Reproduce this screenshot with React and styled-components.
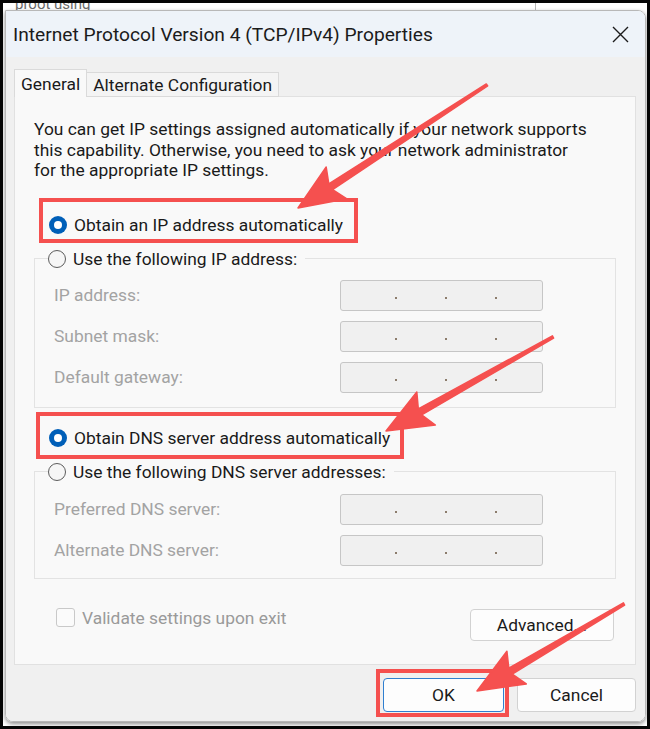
import React from 'react';
import styled, { createGlobalStyle } from 'styled-components';

const GlobalStyle = createGlobalStyle`
  body {
    margin: 0;
    background: #ffffff;
    font-family: Roboto, "Noto Sans", sans-serif;
    color: #1a1a1a;
  }
  * { box-sizing: border-box; }
`;

const RED = '#f5504f';
const TEXT_SIZE = '17.4px';

const Frame = styled.div`
  position: relative;
  width: 650px;
  height: 729px;
  border: 3px solid #050505;
  background: #ffffff;
  padding: 0 1px 0 2px;
  display: flex;
  flex-direction: column;
  overflow: hidden;
`;

const BackStrip = styled.div`
  height: 7px;
  display: flex;
  align-items: flex-end;
  overflow: hidden;
`;

const BackText = styled.span`
  font-size: 15px;
  line-height: 12px;
  height: 12px;
  color: #6a6a6a;
  margin-left: 10px;
  width: 520px;
  flex: none;
`;

const BackLine = styled.span`
  width: 1px;
  height: 7px;
  background: #b5b5b5;
  flex: none;
`;

const Dialog = styled.div`
  height: 712px;
  display: flex;
  flex-direction: column;
  border: 1px solid #b8b8b8;
  border-radius: 0 8px 8px 8px;
  box-shadow: 0 2px 4px rgba(0, 0, 0, 0.45);
  overflow: hidden;
`;

const TitleBar = styled.div`
  height: 46px;
  flex: none;
  background: #eef3f9;
  display: flex;
  align-items: center;
  justify-content: space-between;
  padding: 0 16px 0 7px;
`;

const Title = styled.span`
  font-size: 19.2px;
  color: #1b1b1b;
`;

const Body = styled.div`
  flex: 1;
  background: #f0f0f0;
  padding: 12px 9px 0 8px;
  display: flex;
  flex-direction: column;
`;

const TabRow = styled.div`
  display: flex;
  align-items: flex-end;
  height: 28px;
  margin-bottom: -1px;
`;

const Tab = styled.div`
  position: relative;
  z-index: 1;
  height: ${(p) => (p.$active ? '28px' : '25px')};
  border: 1px solid #dadada;
  border-bottom: ${(p) => (p.$active ? 'none' : '1px solid #dadada')};
  border-left: ${(p) => (p.$active ? '1px solid #dadada' : 'none')};
  background: ${(p) => (p.$active ? '#f9f9f9' : '#f4f4f4')};
  padding: 0 6px;
  display: flex;
  align-items: center;
  font-size: ${TEXT_SIZE};
  color: #1a1a1a;
`;

const Panel = styled.div`
  height: 569px;
  border: 1px solid #e1e1e1;
  background: #f9f9f9;
  padding: 22px 19px 0 19px;
  display: flex;
  flex-direction: column;
  align-items: stretch;
`;

const Intro = styled.p`
  margin: 0;
  font-size: ${TEXT_SIZE};
  line-height: 20.5px;
  color: #1a1a1a;
`;

const RadioRow = styled.div`
  position: relative;
  align-self: flex-start;
  display: flex;
  align-items: center;
  gap: 7px;
  height: 22px;
  margin-left: 15px;
  margin-top: ${(p) => p.$top || 0}px;
  font-size: ${TEXT_SIZE};
  color: #1a1a1a;

  &::after {
    content: '';
    position: absolute;
    inset: ${(p) => p.$box};
    border: 4px solid ${RED};
    pointer-events: none;
  }
`;

const Radio = styled.span`
  width: 18px;
  height: 18px;
  border-radius: 50%;
  flex: none;
  display: flex;
  align-items: center;
  justify-content: center;
  background: ${(p) => (p.$on ? '#005fb8' : '#f6f6f6')};
  border: ${(p) => (p.$on ? 'none' : '1px solid #5c5c5c')};

  &::before {
    content: '';
    display: ${(p) => (p.$on ? 'block' : 'none')};
    width: 8px;
    height: 8px;
    border-radius: 50%;
    background: #ffffff;
  }
`;

const Group = styled.fieldset`
  margin: 12px 0 0;
  padding: ${(p) => p.$pad};
  border: 1px solid #e3e3e3;
  min-width: 0;
`;

const Legend = styled.legend`
  margin-left: 13px;
  padding: 0 8px 0 0;
  display: flex;
  align-items: center;
  gap: 7px;
  height: 22px;
  font-size: ${TEXT_SIZE};
  color: #1a1a1a;
`;

const FieldGrid = styled.div`
  display: grid;
  grid-template-columns: 286px 203px;
  row-gap: 10px;
  align-items: center;
  padding-left: 19px;
`;

const FieldLabel = styled.span`
  font-size: ${TEXT_SIZE};
  color: #a3a3a3;
`;

const AddressBox = styled.div`
  height: 31px;
  border: 1px solid #c6c6c6;
  border-radius: 3px;
  background: #f0f0f0;
  display: flex;
  align-items: center;
  gap: 48px;
  padding: 6px 0 0 54px;
`;

const Dot = styled.span`
  width: 2px;
  height: 2px;
  background: #8c7c6c;
`;

const BottomRow = styled.div`
  margin-top: 30px;
  display: flex;
  justify-content: space-between;
  align-items: flex-start;
  padding-right: 2px;
`;

const CheckLabel = styled.label`
  display: flex;
  align-items: center;
  gap: 7px;
  margin: -1px 0 0 22px;
  font-size: ${TEXT_SIZE};
  color: #9a9a9a;
`;

const CheckBox = styled.span`
  width: 19px;
  height: 19px;
  border: 1px solid #c9c9c9;
  border-radius: 3px;
  background: #fbfbfb;
`;

const Button = styled.button`
  position: relative;
  width: ${(p) => p.$w}px;
  height: ${(p) => p.$h || 34}px;
  border: 1px solid ${(p) => (p.$primary ? '#2f7fd0' : '#d2d2d2')};
  border-radius: 4px;
  background: #fdfdfd;
  font-family: inherit;
  font-size: ${TEXT_SIZE};
  color: #1a1a1a;
  padding: 0;

  &::after {
    content: '';
    display: ${(p) => (p.$box ? 'block' : 'none')};
    position: absolute;
    inset: ${(p) => p.$box};
    border: 4px solid ${RED};
    pointer-events: none;
  }
`;

const Footer = styled.div`
  display: flex;
  justify-content: flex-end;
  gap: 13px;
  padding: 13px 0 0 0;
`;

const Marks = styled.svg`
  position: absolute;
  top: -3px;
  left: -3px;
  pointer-events: none;
`;

const arrow = (x1, y1, x2, y2, head = 46, wing = 19, neck = 7, tail = 2.5, back = 7) => {
  const len = Math.hypot(x2 - x1, y2 - y1);
  const ux = (x2 - x1) / len;
  const uy = (y2 - y1) / len;
  const nx = -uy;
  const ny = ux;
  const bx = x2 - ux * head;
  const by = y2 - uy * head;
  const p = (x, y) => `${x.toFixed(1)},${y.toFixed(1)}`;
  return [
    p(x1 + (nx * tail) / 2, y1 + (ny * tail) / 2),
    p(bx + ux * back + (nx * neck) / 2, by + uy * back + (ny * neck) / 2),
    p(bx + nx * wing, by + ny * wing),
    p(x2, y2),
    p(bx - nx * wing, by - ny * wing),
    p(bx + ux * back - (nx * neck) / 2, by + uy * back - (ny * neck) / 2),
    p(x1 - (nx * tail) / 2, y1 - (ny * tail) / 2),
  ].join(' ');
};

const arrows = [
  [487, 85, 298, 208],
  [553, 337, 386, 431],
  [624, 604, 477, 691],
];

const AddressField = () => (
  <AddressBox>
    <Dot />
    <Dot />
    <Dot />
  </AddressBox>
);

const ipFields = ['IP address:', 'Subnet mask:', 'Default gateway:'];
const dnsFields = ['Preferred DNS server:', 'Alternate DNS server:'];

export default function App() {
  return (
    <>
      <GlobalStyle />
      <Frame>
        <BackStrip>
          <BackText>proot using</BackText>
          <BackLine />
        </BackStrip>
        <Dialog>
          <TitleBar>
            <Title>Internet Protocol Version 4 (TCP/IPv4) Properties</Title>
            <svg width="17" height="17" viewBox="0 0 17 17">
              <path d="M1 1 L16 16 M16 1 L1 16" stroke="#1b1b1b" strokeWidth="1.4" fill="none" />
            </svg>
          </TitleBar>
          <Body>
            <TabRow>
              <Tab $active>General</Tab>
              <Tab>Alternate Configuration</Tab>
            </TabRow>
            <Panel>
              <Intro>
                You can get IP settings assigned automatically if your network supports
                <br />
                this capability. Otherwise, you need to ask your network administrator
                <br />
                for the appropriate IP settings.
              </Intro>

              <RadioRow $top={33} $box="-16px -15px -7px -10px">
                <Radio $on />
                Obtain an IP address automatically
              </RadioRow>

              <Group $pad="10px 0 14px 0">
                <Legend>
                  <Radio />
                  Use the following IP address:
                </Legend>
                <FieldGrid>
                  {ipFields.map((f) => (
                    <React.Fragment key={f}>
                      <FieldLabel>{f}</FieldLabel>
                      <AddressField />
                    </React.Fragment>
                  ))}
                </FieldGrid>
              </Group>

              <RadioRow $top={19} $box="-15px -14px -10px -13px">
                <Radio $on />
                Obtain DNS server address automatically
              </RadioRow>

              <Group $pad="11px 0 12px 0">
                <Legend>
                  <Radio />
                  Use the following DNS server addresses:
                </Legend>
                <FieldGrid>
                  {dnsFields.map((f) => (
                    <React.Fragment key={f}>
                      <FieldLabel>{f}</FieldLabel>
                      <AddressField />
                    </React.Fragment>
                  ))}
                </FieldGrid>
              </Group>

              <BottomRow>
                <CheckLabel>
                  <CheckBox />
                  Validate settings upon exit
                </CheckLabel>
                <Button $w={144} $h={32}>Advanced...</Button>
              </BottomRow>
            </Panel>
            <Footer>
              <Button $w={121} $primary $box="-10px -6px -6px -8px">OK</Button>
              <Button $w={119}>Cancel</Button>
            </Footer>
          </Body>
        </Dialog>
        <Marks width="650" height="729" viewBox="0 0 650 729">
          {arrows.map((a, i) => (
            <polygon key={i} points={arrow(...a)} fill={RED} stroke={RED} strokeWidth="1.5" strokeLinejoin="round" />
          ))}
        </Marks>
      </Frame>
    </>
  );
}
